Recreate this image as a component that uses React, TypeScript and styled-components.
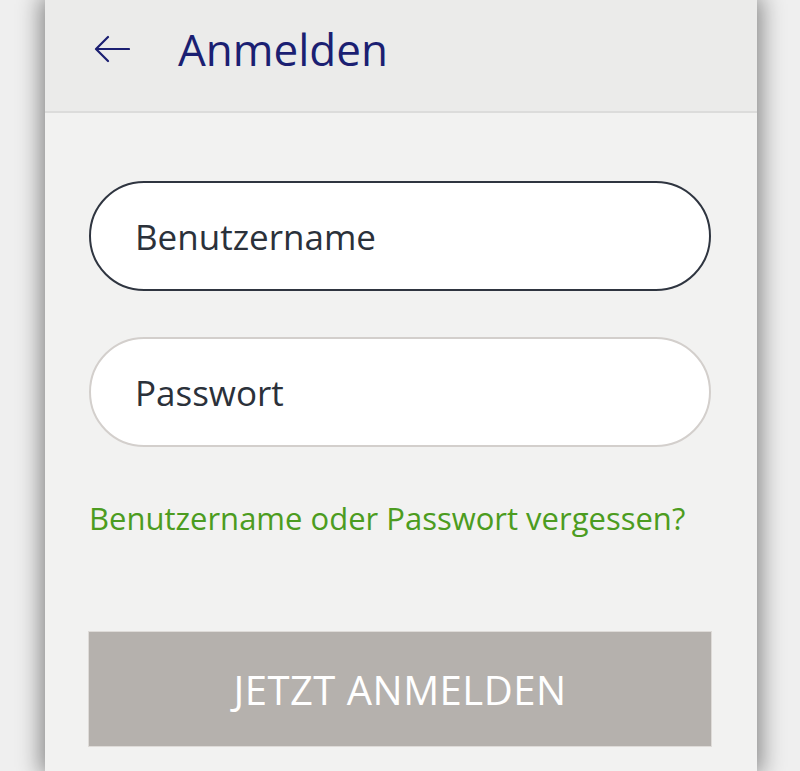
import styled, { createGlobalStyle } from "styled-components";

const GlobalStyle = createGlobalStyle`
  html, body {
    margin: 0;
    padding: 0;
    background: #efefef;
    font-family: "Open Sans", "Noto Sans", sans-serif;
  }
`;

const Page = styled.div`
  height: 771px;
  overflow: hidden;
  display: flex;
`;

const Screen = styled.div`
  margin-left: 45px;
  width: 712px;
  height: 100%;
  background: #f2f2f1;
  box-shadow: 0 0 22px 4px rgba(0, 0, 0, 0.45);
  display: flex;
  flex-direction: column;
`;

const Header = styled.header`
  box-sizing: border-box;
  height: 113px;
  background: #ebebea;
  border-bottom: 2px solid #dcdcdb;
  display: flex;
  align-items: center;
  padding: 0 0 14px 49px;
`;

const BackButton = styled.button`
  background: none;
  border: 0;
  padding: 0;
  width: 36px;
  height: 28px;
  display: flex;
  align-items: center;
  margin-right: 48px;
  svg {
    display: block;
  }
`;

const Title = styled.h1`
  margin: 0;
  font-size: 44px;
  font-weight: 400;
  color: #1b1f72;
  line-height: 1;
`;

const Form = styled.form`
  display: flex;
  flex-direction: column;
  padding: 68px 46px 0 44px;
`;

const Field = styled.input<{ $focused?: boolean }>`
  box-sizing: border-box;
  height: 110px;
  width: 100%;
  border-radius: 55px;
  background: #fff;
  border: 2px solid ${(p) => (p.$focused ? "#2f3540" : "#d3cfcc")};
  padding: 0 0 0 44px;
  font-family: "Open Sans", "Noto Sans", sans-serif;
  font-size: 35px;
  color: #2b313a;
  outline: none;
  margin-bottom: 46px;

  &::placeholder {
    color: #2b313a;
    opacity: 1;
  }
`;

const ForgotLink = styled.a`
  font-size: 31px;
  color: #4c9c20;
  text-decoration: none;
  line-height: 1;
  margin-top: 10px;
`;

const SubmitButton = styled.button`
  margin-top: 98px;
  height: 114px;
  width: 100%;
  border: 0;
  background: #b5b1ad;
  color: #fff;
  font-family: "Open Sans", "Noto Sans", sans-serif;
  font-size: 40px;
  letter-spacing: 0.5px;
  text-transform: uppercase;
  box-shadow: 0 0 0 1px #dedbd8;
`;

function BackArrow() {
  return (
    <svg width="36" height="28" viewBox="0 0 36 28" fill="none">
      <path
        d="M35 14H3M14 2L2 14l12 12"
        stroke="#1b1f72"
        strokeWidth="2.2"
        strokeLinecap="round"
        strokeLinejoin="round"
      />
    </svg>
  );
}

export default function App() {
  return (
    <>
      <GlobalStyle />
      <Page>
        <Screen>
          <Header>
            <BackButton aria-label="Zurück">
              <BackArrow />
            </BackButton>
            <Title>Anmelden</Title>
          </Header>
          <Form onSubmit={(e) => e.preventDefault()}>
            <Field $focused placeholder="Benutzername" />
            <Field type="password" placeholder="Passwort" />
            <ForgotLink href="#">Benutzername oder Passwort vergessen?</ForgotLink>
            <SubmitButton type="submit">Jetzt anmelden</SubmitButton>
          </Form>
        </Screen>
      </Page>
    </>
  );
}
